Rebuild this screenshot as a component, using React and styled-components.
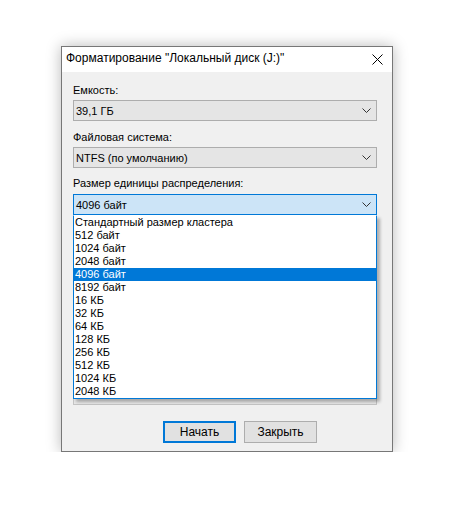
import React from 'react';
import styled, { createGlobalStyle } from 'styled-components';

const GlobalStyle = createGlobalStyle`
  html, body { margin: 0; padding: 0; background: #ffffff; }
  body {
    font-family: "Liberation Sans", Arial, sans-serif;
    font-size: 11px;
    color: #000;
  }
`;

const Stage = styled.div`
  padding: 46px 0 0 61px;
`;

const Dialog = styled.div`
  width: 330px;
  border: 1px solid #777777;
  background: #f0f0f0;
  box-shadow: 0 0 14px rgba(0, 0, 0, 0.28);
  display: flex;
  flex-direction: column;
`;

const TitleBar = styled.div`
  height: 25px;
  background: #ffffff;
  display: flex;
  align-items: center;
  justify-content: space-between;
`;

const Title = styled.span`
  padding-left: 4px;
  font-size: 12px;
  line-height: 16px;
  margin-top: -3px;
`;

const CloseButton = styled.div`
  width: 30px;
  height: 25px;
  display: flex;
  align-items: center;
  justify-content: center;
`;

const Body = styled.div`
  padding: 10px 15px 8px 11px;
  display: flex;
  flex-direction: column;
`;

const Label = styled.div`
  line-height: 16px;
  height: 16px;
  margin-top: ${p => p.$gap || 0}px;
`;

const ComboWrap = styled.div`
  position: relative;
  margin-top: ${p => p.$gap || 2}px;
`;

const Combo = styled.div`
  height: 19px;
  border: 1px solid ${p => (p.$focused ? '#0078d7' : '#adadad')};
  background: ${p => (p.$focused ? '#cce4f7' : '#e5e5e5')};
  display: flex;
  align-items: center;
  justify-content: space-between;
  padding-left: 2px;
`;

const ComboText = styled.span`
  line-height: 16px;
`;

const Chevron = styled.svg`
  margin-right: 5px;
  flex: none;
`;

const DropList = styled.ul`
  position: absolute;
  z-index: 2;
  left: 0;
  right: 0;
  top: 100%;
  margin: 0;
  padding: 0;
  list-style: none;
  background: #ffffff;
  border: 1px solid #0078d7;
  border-top-color: #ffffff;
  box-shadow: 3px 3px 3px rgba(0, 0, 0, 0.28);
`;

const Item = styled.li`
  height: 13px;
  line-height: 13px;
  padding-left: 1px;
  white-space: nowrap;
  background: ${p => (p.$selected ? '#0078d7' : 'transparent')};
  color: ${p => (p.$selected ? '#ffffff' : '#000000')};
`;

const HiddenArea = styled.div`
  height: 180px;
  margin-top: 8px;
  border: 1px solid #c4c4c4;
  background: #e8e8e8;
`;

const ButtonRow = styled.div`
  display: flex;
  justify-content: flex-end;
  gap: 8px;
  margin-top: 16px;
  padding-right: 60px;
`;

const Button = styled.button`
  width: 73px;
  height: 22px;
  box-sizing: border-box;
  font-family: inherit;
  font-size: 12px;
  color: #000;
  background: #e1e1e1;
  border: ${p => (p.$default ? '2px solid #0078d7' : '1px solid #adadad')};
  padding: 0;
  margin: 0;
`;

const sizes = [
  'Стандартный размер кластера',
  '512 байт',
  '1024 байт',
  '2048 байт',
  '4096 байт',
  '8192 байт',
  '16 КБ',
  '32 КБ',
  '64 КБ',
  '128 КБ',
  '256 КБ',
  '512 КБ',
  '1024 КБ',
  '2048 КБ',
];

const ArrowDown = () => (
  <Chevron width="9" height="5" viewBox="0 0 9 5">
    <polyline points="0.5,0.5 4.5,4.5 8.5,0.5" fill="none" stroke="#333" strokeWidth="1" />
  </Chevron>
);

const Close = () => (
  <svg width="11" height="11" viewBox="0 0 11 11">
    <path d="M0.5 0.5 L10.5 10.5 M10.5 0.5 L0.5 10.5" stroke="#000" strokeWidth="1" />
  </svg>
);

export default function App() {
  return (
    <Stage>
      <GlobalStyle />
      <Dialog>
        <TitleBar>
          <Title>Форматирование "Локальный диск (J:)"</Title>
          <CloseButton><Close /></CloseButton>
        </TitleBar>
        <Body>
          <Label>Емкость:</Label>
          <ComboWrap>
            <Combo><ComboText>39,1 ГБ</ComboText><ArrowDown /></Combo>
          </ComboWrap>

          <Label $gap={8}>Файловая система:</Label>
          <ComboWrap>
            <Combo><ComboText>NTFS (по умолчанию)</ComboText><ArrowDown /></Combo>
          </ComboWrap>

          <Label $gap={7}>Размер единицы распределения:</Label>
          <ComboWrap $gap={3}>
            <Combo $focused><ComboText>4096 байт</ComboText><ArrowDown /></Combo>
            <DropList>
              {sizes.map(s => (
                <Item key={s} $selected={s === '4096 байт'}>{s}</Item>
              ))}
            </DropList>
          </ComboWrap>

          <HiddenArea />

          <ButtonRow>
            <Button $default>Начать</Button>
            <Button>Закрыть</Button>
          </ButtonRow>
        </Body>
      </Dialog>
    </Stage>
  );
}
